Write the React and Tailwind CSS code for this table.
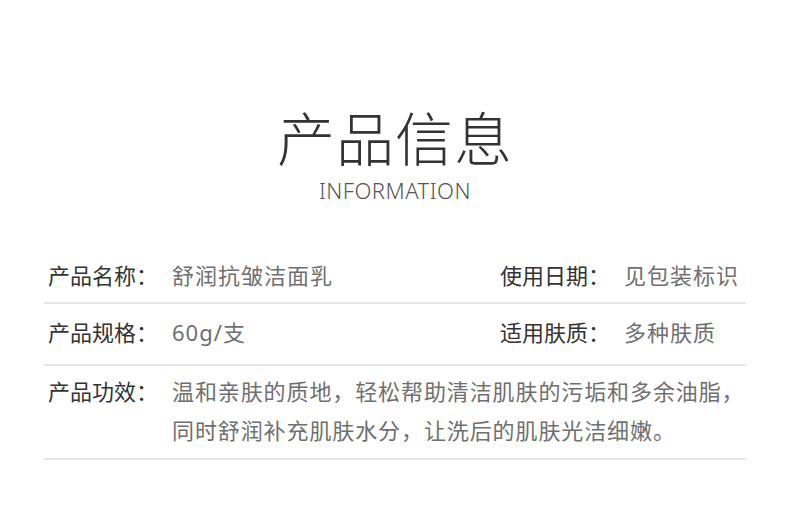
const font = {
  fontFamily: '"Noto Sans", "Noto Sans CJK SC", sans-serif',
};

const Row = ({ children, className = "" }) => (
  <div className={`flex border-b-2 border-[#e6e6e6] ${className}`}>{children}</div>
);

const Field = ({ label, value, className = "" }) => (
  <div className={`flex items-center ${className}`}>
    <span className="w-[124px] shrink-0 text-[#333]">{label}</span>
    <span className="text-[#6f6f6f] tracking-[1px]">{value}</span>
  </div>
);

export default function App() {
  return (
    <div className="w-[790px] h-[505px] bg-white overflow-hidden" style={font}>
      {/* Header */}
      <div className="flex flex-col items-center pt-[107px]">
        <h1 className="text-[58px] leading-[64px] font-light text-[#333] tracking-[1px]">
          产品信息
        </h1>
        <div className="mt-[6px] text-[22px] leading-[26px] font-light text-[#555] tracking-[0.5px]">
          INFORMATION
        </div>
      </div>

      {/* Table */}
      <div className="mx-[44px] mt-[46px] text-[22px]">
        <Row className="h-[55px] items-center pl-[4px]">
          <Field className="w-[452px]" label="产品名称：" value="舒润抗皱洁面乳" />
          <Field label="使用日期：" value="见包装标识" />
        </Row>
        <Row className="h-[62px] items-center pl-[4px] pb-[4px]">
          <Field className="w-[452px]" label="产品规格：" value="60g/支" />
          <Field label="适用肤质：" value="多种肤质" />
        </Row>
        <Row className="pl-[4px] pt-[6px] pb-[8px] leading-[39px]">
          <span className="w-[124px] shrink-0 text-[#333]">产品功效：</span>
          <span className="text-[#6f6f6f] tracking-[0.9px] whitespace-nowrap">
            温和亲肤的质地，轻松帮助清洁肌肤的污垢和多余油脂，
            <br />
            同时舒润补充肌肤水分，让洗后的肌肤光洁细嫩。
          </span>
        </Row>
      </div>
    </div>
  );
}
